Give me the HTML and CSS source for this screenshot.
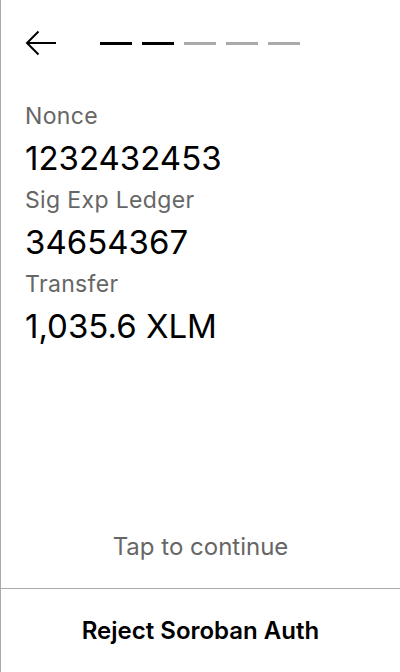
FILE: index.html
```html
<!DOCTYPE html>
<html>
<head>
<meta charset="utf-8">
<link rel="stylesheet" href="styles.css">
</head>
<body>
<div class="screen">
  <div class="top">
    <svg class="back" width="32" height="28" viewBox="0 0 32 28">
      <path d="M31 13H2M13.5 1.5L2 13L13.5 24.5" fill="none" stroke="#000" stroke-width="2"/>
    </svg>
    <div class="steps">
      <span class="step done"></span>
      <span class="step done"></span>
      <span class="step"></span>
      <span class="step"></span>
      <span class="step"></span>
    </div>
  </div>
  <div class="fields">
    <div class="label">Nonce</div>
    <div class="value">1232432453</div>
    <div class="label">Sig Exp Ledger</div>
    <div class="value">34654367</div>
    <div class="label">Transfer</div>
    <div class="value">1,035.6 XLM</div>
  </div>
  <div class="tap">Tap to continue</div>
  <div class="reject">Reject Soroban Auth</div>
</div>
</body>
</html>
```
FILE: styles.css
```css
* { box-sizing: border-box; }
html, body { margin: 0; padding: 0; background: #fff; }
body { font-family: Inter, "Noto Sans", sans-serif; color: #000; }
.screen {
  width: 400px;
  height: 672px;
  border-left: 1px solid #aaa;
  display: flex;
  flex-direction: column;
}
.top {
  display: flex;
  align-items: center;
  padding: 30px 0 0 24px;
  height: 57px;
}
.back { display: block; }
.steps {
  display: flex;
  gap: 10px;
  margin-left: 43px;
}
.step {
  display: block;
  width: 32px;
  height: 3px;
  background: #aaa;
}
.step.done { background: #000; }
.fields {
  padding: 39px 0 0 24px;
  flex: 1;
}
.label {
  font-size: 23px;
  letter-spacing: 0.35px;
  color: #666;
  line-height: 40px;
}
.value {
  font-size: 33px;
  line-height: 44px;
}
.tap {
  text-align: center;
  font-size: 24px;
  line-height: 30px;
  color: #666;
  padding-bottom: 26px;
}
.reject {
  border-top: 1px solid #aaa;
  height: 84px;
  display: flex;
  align-items: center;
  justify-content: center;
  font-size: 24px;
  font-weight: 600;
}
```
